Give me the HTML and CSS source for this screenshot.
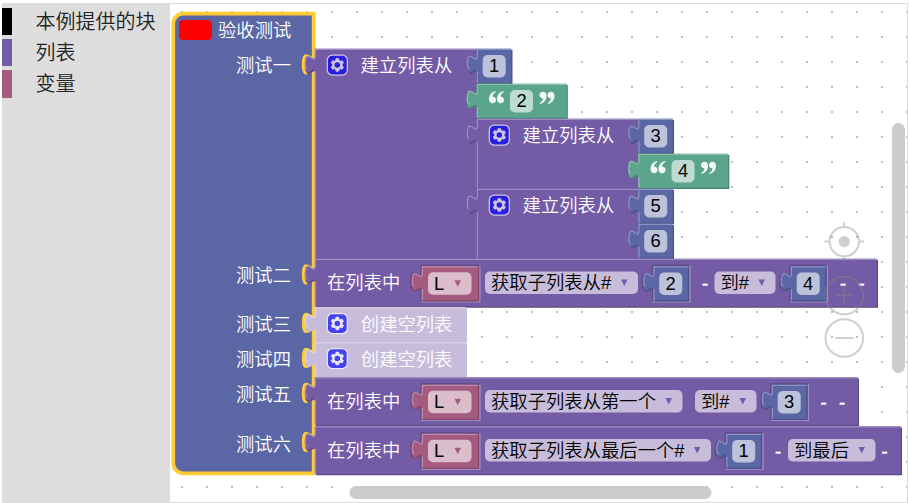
FILE: index.html
```html
<!DOCTYPE html>
<html lang="zh-CN">
<head>
<meta charset="utf-8">
<title>验收测试</title>
<link rel="stylesheet" href="styles.css">
</head>
<body>
<main class="editor">
  <nav class="toolbox">
    <div class="category category-custom">本例提供的块</div>
    <div class="category category-lists">列表</div>
    <div class="category category-variables">变量</div>
  </nav>
  <svg class="workspace" viewBox="170 4 737 498" id="workspace">
    <defs>
      <pattern id="grid" x="181" y="11" width="25" height="25" patternUnits="userSpaceOnUse">
        <rect width="2" height="2" fill="#bfbfbf"/>
      </pattern>
      <g id="gear">
        <rect class="gear-box" width="16" height="16" rx="4"/>
        <path class="gear-symbol" d="m4.203,7.296 0,1.368 -0.92,0.677 -0.11,0.41 0.9,1.559 0.41,0.11 1.043,-0.457 1.187,0.683 0.127,1.134 0.3,0.3 1.8,0 0.3,-0.299 0.127,-1.138 1.185,-0.682 1.046,0.458 0.409,-0.11 0.9,-1.559 -0.11,-0.41 -0.92,-0.677 0,-1.366 0.92,-0.677 0.11,-0.41 -0.9,-1.559 -0.409,-0.109 -1.046,0.458 -1.185,-0.682 -0.127,-1.138 -0.3,-0.299 -1.8,0 -0.3,0.3 -0.126,1.135 -1.187,0.682 -1.043,-0.457 -0.41,0.11 -0.899,1.559 0.108,0.409z"/>
        <circle class="gear-hole" cx="8" cy="8" r="2.2"/>
      </g>
      <path id="quote" d="M6.4 0 C2.2 1.3 0 4.3 0 8 C0 10.7 1.4 12.2 3.6 12.2 C5.6 12.2 7 10.8 7 8.9 C7 7 5.7 5.8 3.7 5.8 C3.5 3.9 4.6 2.1 6.8 1 Z"/>
    </defs>
    <rect x="170" y="4" width="738" height="498" fill="url(#grid)"/>
    <g id="blocks"></g>
    <g class="controls">
      <circle cx="844.3" cy="241.6" r="14.7"/>
      <path d="M844.3 222v5M844.3 256.300v5M824.500 241.600h5M859 241.600h5"/>
      <circle class="control-dot" cx="844.3" cy="241.600" r="5.600"/>
      <circle cx="844.3" cy="295.500" r="18.800"/>
      <path d="M835.300 295.500h18M844.300 286.500v18"/>
      <circle cx="844.3" cy="338" r="18.800"/>
      <path d="M835.300 338h18"/>
    </g>
    <rect class="scrollbar" x="892" y="123" width="13" height="250" rx="6.500"/>
    <rect class="scrollbar" x="349.500" y="486" width="362" height="13" rx="6.500"/>
  </svg>
</main>
<script src="blocks.js"></script>
</body>
</html>
```
FILE: styles.css
```css
body {
  margin: 0;
  background: #fff;
  font-family: "Liberation Sans", "Noto Sans CJK SC", sans-serif;
}

.editor {
  box-sizing: border-box;
  display: flex;
  width: 906px;
  height: 500px;
  margin: 3px 0 0 2px;
  border: 1px solid #ddd;
  border-left: 0;
  overflow: hidden;
}

.toolbox {
  box-sizing: border-box;
  flex: 0 0 168px;
  display: flex;
  flex-direction: column;
  gap: 4px;
  padding-top: 4px;
  background: #ddd;
}

.category {
  height: 27px;
  padding-left: 23.5px;
  border-left: 10px solid #000;
  font-size: 20px;
  line-height: 29px;
  font-weight: 350;
  color: #222;
  white-space: nowrap;
}

.category-lists { border-color: #745ba5; }
.category-variables { border-color: #a55b80; height: 28px; }

.workspace {
  flex: 0 0 737px;
  height: 498px;
  background: #fff;
}

.workspace text {
  font-size: 18.33px;
  font-weight: 350;
  fill: #fff;
  white-space: pre;
}

.workspace .field-text { fill: #000; }
.workspace .dash { stroke: #fff; stroke-width: .5; }
.centered { text-anchor: middle; }
.trailing { text-anchor: end; }

.procedure { fill: #5b67a5; stroke: #fc3; stroke-width: 3.75; }
.swatch { fill: #f00; }
.math { fill: #5b67a5; }
.math-dark { fill: #495284; }
.math-light { stroke: #8c95c0; }
.text { fill: #5ba58c; }
.text-dark { fill: #498470; }
.text-light { stroke: #8cc0ae; }
.list { fill: #745ba5; }
.list-dark { fill: #5d4984; }
.list-light { stroke: #9e8cc0; }
.variable { fill: #a55b80; }
.variable-dark { fill: #844966; }
.variable-light { stroke: #c08ca6; }
.ghost, .ghost-dark { fill: #c7bddb; }
.ghost-light { stroke: #dbd4e8; }

.highlight { fill: none; stroke-width: 1.25; }
.socket-shade { fill: none; stroke: #5d4984; stroke-width: 1.3; }
.socket-light { fill: none; stroke: #9e8cc0; stroke-width: 1.3; }
.field-box { fill: #fff; fill-opacity: .6; }
.quotes { fill: #fff; opacity: .94; }

.gear { opacity: .65; }
.gear-box { fill: #00f; stroke: #fff; stroke-width: 1; }
.gear-symbol { fill: #fff; stroke: #fff; stroke-width: .6; }
.gear-hole { fill: #00f; }

.controls {
  opacity: .4;
  fill: none;
  stroke: #888;
  stroke-width: 2;
}

.control-dot { fill: #888; stroke: none; }
.scrollbar { fill: #ccc; }
```
FILE: blocks.js
```js
const parts = [];
const add = s => parts.push(s);
const TAB_DOWN = 'c0,12.5 -10,-10 -10,9.375 s10,-3.125 10,9.375';

function label(x, cy, text, cls = '') {
  add(`<text class="${cls}" x="${x}" y="${cy + 6}">${text}</text>`);
}

function block(kind, x, y, w, h) {
  x -= .2;
  y -= .2;
  const d = `M${x},${y} v6.25 ${TAB_DOWN} V${y + h} h${w} v${-h} z`;
  add(`<path class="${kind}-dark" transform="translate(1.2 1.2)" d="${d}"/>`);
  add(`<path class="${kind}" d="${d}"/>`);
  add(`<path class="highlight ${kind}-light" d="M${x + w},${y + .6} H${x + .6} v5.65 c0,12.500 -10,-10 -10,9.375 q0,4 2,4.500 M${x + .6},${y + 23} V${y + h}"/>`);
}

function field(x, y, w) {
  add(`<rect class="field-box" x="${x}" y="${y}" width="${w}" height="22.5" rx="5"/>`);
}

function number(x, y, n) {
  block('math', x, y, 34.5, 34);
  field(x + 5.7, y + 6, 23);
  label(x + 17.2, y + 17.3, n, 'field-text centered');
}

function string(x, y, n) {
  block('text', x, y, 89.8, 34);
  field(x + 33, y + 6, 23);
  label(x + 44.5, y + 17.3, n, 'field-text centered');
  add(`<g class="quotes"><use href="#quote" x="${x + 12}" y="${y + 7}"/><use href="#quote" x="${x + 20}" y="${y + 7}"/>` +
      `<use href="#quote" transform="translate(${x + 69.5} ${y + 20}) rotate(180)"/><use href="#quote" transform="translate(${x + 77.5} ${y + 20}) rotate(180)"/></g>`);
}

function gear(x, y) {
  add(`<use class="gear" href="#gear" transform="translate(${x} ${y}) scale(1.25)"/>`);
}

function list(x, y, h, w) {
  block('list', x, y, w, h);
  gear(x + 12.3, y + 6);
  label(x + 45.6, y + 17, '建立列表从');
}

function emptyList(y) {
  block('ghost', 315, y, 151, 34);
  gear(327.3, y + 6);
  label(360.8, y + 17, '创建空列表');
}

function socket(x, y, w) {
  add(`<path class="socket-shade" d="M${x + w},${y - 1} H${x - 1} v7.25 ${TAB_DOWN} V${y + 35}"/>`);
  add(`<path class="socket-light" d="M${x - 1},${y + 35.3} H${x + w + 1} V${y - 1}"/>`);
}

function dropdown(x, y, w, text, color = '#745ba5') {
  field(x, y, w);
  label(x + 6, y + 11.5, text, 'field-text');
  add(`<path fill="${color}" d="M${x + w - 17},${y + 8} h6.500 l-3.250,6.500 z"/>`);
}

function inlineNumber(x, y, n) {
  socket(x, y, 35.5);
  number(x, y, n);
}

function sublist(y, w, option, optionWidth) {
  block('list', 315, y, w, 47.7);
  label(327, y + 24, '在列表中');
  socket(422, y + 7.5, 57);
  block('variable', 422, y + 7.5, 56, 34);
  dropdown(428, y + 13.3, 43.5, 'L', '#a55b80');
  dropdown(485, y + 12.5, optionWidth, option);
}

let root = 'M183.3,13.7 H313.700';
for (const y of [49, 259, 307.5, 342.5, 377.5, 426.5]) {
  root += ` V${y + 6} ${TAB_DOWN}`;
}
add(`<path class="procedure" d="${root} V473.300 H183.300 a10,10 0 0 1 -10,-10 V23.700 a10,10 0 0 1 10,-10 z"/>`);
add('<rect class="swatch" x="179" y="20" width="33" height="20" rx="4.500"/>');
label(218, 31, '验收测试');
[['测试一', 66], ['测试二', 276], ['测试三', 325], ['测试四', 360], ['测试五', 395], ['测试六', 444.5]]
  .forEach(([text, y]) => label(291, y, text, 'trailing'));

list(315, 49, 210, 162);
number(477, 49, '1');
string(477, 84, '2');
list(477, 119, 70, 161.5);
number(638.5, 119, '3');
string(638.5, 154, '4');
list(477, 189, 70, 161.5);
number(638.5, 189, '5');
number(638.5, 224, '6');

sublist(259, 562, '获取子列表从#', 153);
inlineNumber(653.5, 266.5, '2');
label(702, 284, '-', 'dash');
dropdown(714.5, 271.5, 61, '到#');
inlineNumber(791, 266.5, '4');
label(840, 284, '-', 'dash');
label(858.5, 284, '-', 'dash');

emptyList(307.5);
emptyList(342.5);

sublist(377.5, 543, '获取子列表从第一个', 197.5);
dropdown(695, 390, 61.5, '到#');
inlineNumber(772, 385, '3');
label(820.5, 402.5, '-', 'dash');
label(839, 402.5, '-', 'dash');

sublist(426.5, 586, '获取子列表从最后一个#', 226);
inlineNumber(726.5, 434, '1');
label(775, 451.500, '-', 'dash');
dropdown(788, 439, 87.5, '到最后');
label(881.5, 451.500, '-', 'dash');

document.getElementById('blocks').innerHTML = parts.join('');
```
